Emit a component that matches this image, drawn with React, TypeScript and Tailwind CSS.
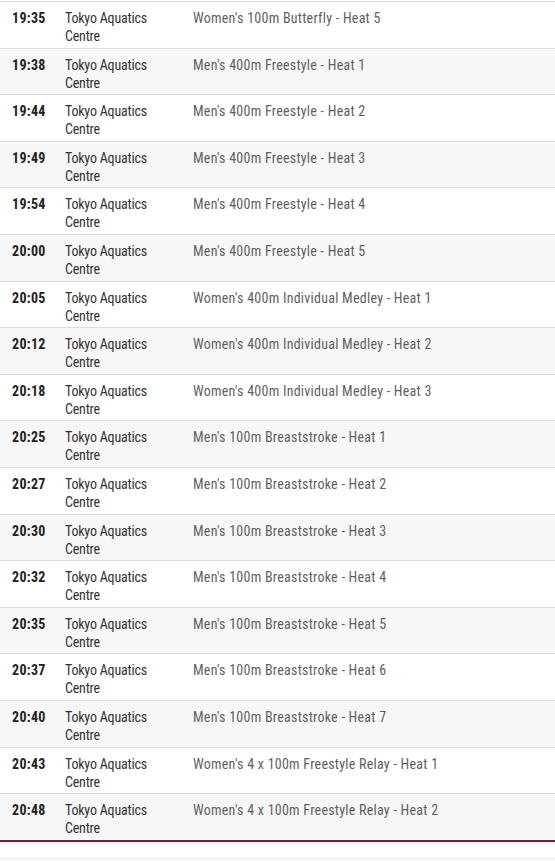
const rows: [string, string][] = [
  ["19:35", "Women's 100m Butterfly - Heat 5"],
  ["19:38", "Men's 400m Freestyle - Heat 1"],
  ["19:44", "Men's 400m Freestyle - Heat 2"],
  ["19:49", "Men's 400m Freestyle - Heat 3"],
  ["19:54", "Men's 400m Freestyle - Heat 4"],
  ["20:00", "Men's 400m Freestyle - Heat 5"],
  ["20:05", "Women's 400m Individual Medley - Heat 1"],
  ["20:12", "Women's 400m Individual Medley - Heat 2"],
  ["20:18", "Women's 400m Individual Medley - Heat 3"],
  ["20:25", "Men's 100m Breaststroke - Heat 1"],
  ["20:27", "Men's 100m Breaststroke - Heat 2"],
  ["20:30", "Men's 100m Breaststroke - Heat 3"],
  ["20:32", "Men's 100m Breaststroke - Heat 4"],
  ["20:35", "Men's 100m Breaststroke - Heat 5"],
  ["20:37", "Men's 100m Breaststroke - Heat 6"],
  ["20:40", "Men's 100m Breaststroke - Heat 7"],
  ["20:43", "Women's 4 x 100m Freestyle Relay - Heat 1"],
  ["20:48", "Women's 4 x 100m Freestyle Relay - Heat 2"],
];

export default function App() {
  return (
    <div
      className="w-[555px] h-[861px] bg-white overflow-hidden pt-[1px] font-stretch-condensed"
      style={{ fontFamily: '"Roboto Condensed", "Roboto", sans-serif' }}
    >
      <div className="border-b-2 border-[#5b2a31]">
        {rows.map(([t, e], i) => (
          <div
            key={i}
            className={`flex h-[46.6px] border-t border-[#dcdcdc] pt-[7px] text-[14px] leading-[18px] ${
              i % 2 === 1 ? "bg-[#f7f7f8]" : "bg-white"
            }`}
          >
            <div className="w-[65px] pl-[12px] font-bold text-[#222] tracking-[0.3px]">{t}</div>
            <div className="w-[128px] text-[#333] tracking-[-0.2px]">
              Tokyo Aquatics
              <br />
              Centre
            </div>
            <div className="flex-1 text-[#5f5f5f] tracking-[0.25px]">{e}</div>
          </div>
        ))}
      </div>
      <div className="h-[2px] bg-[#fbeaec]" />
      <div className="h-[13px] bg-white" />
      <div className="h-[5px] bg-[#f7f7f7]" />
    </div>
  );
}
